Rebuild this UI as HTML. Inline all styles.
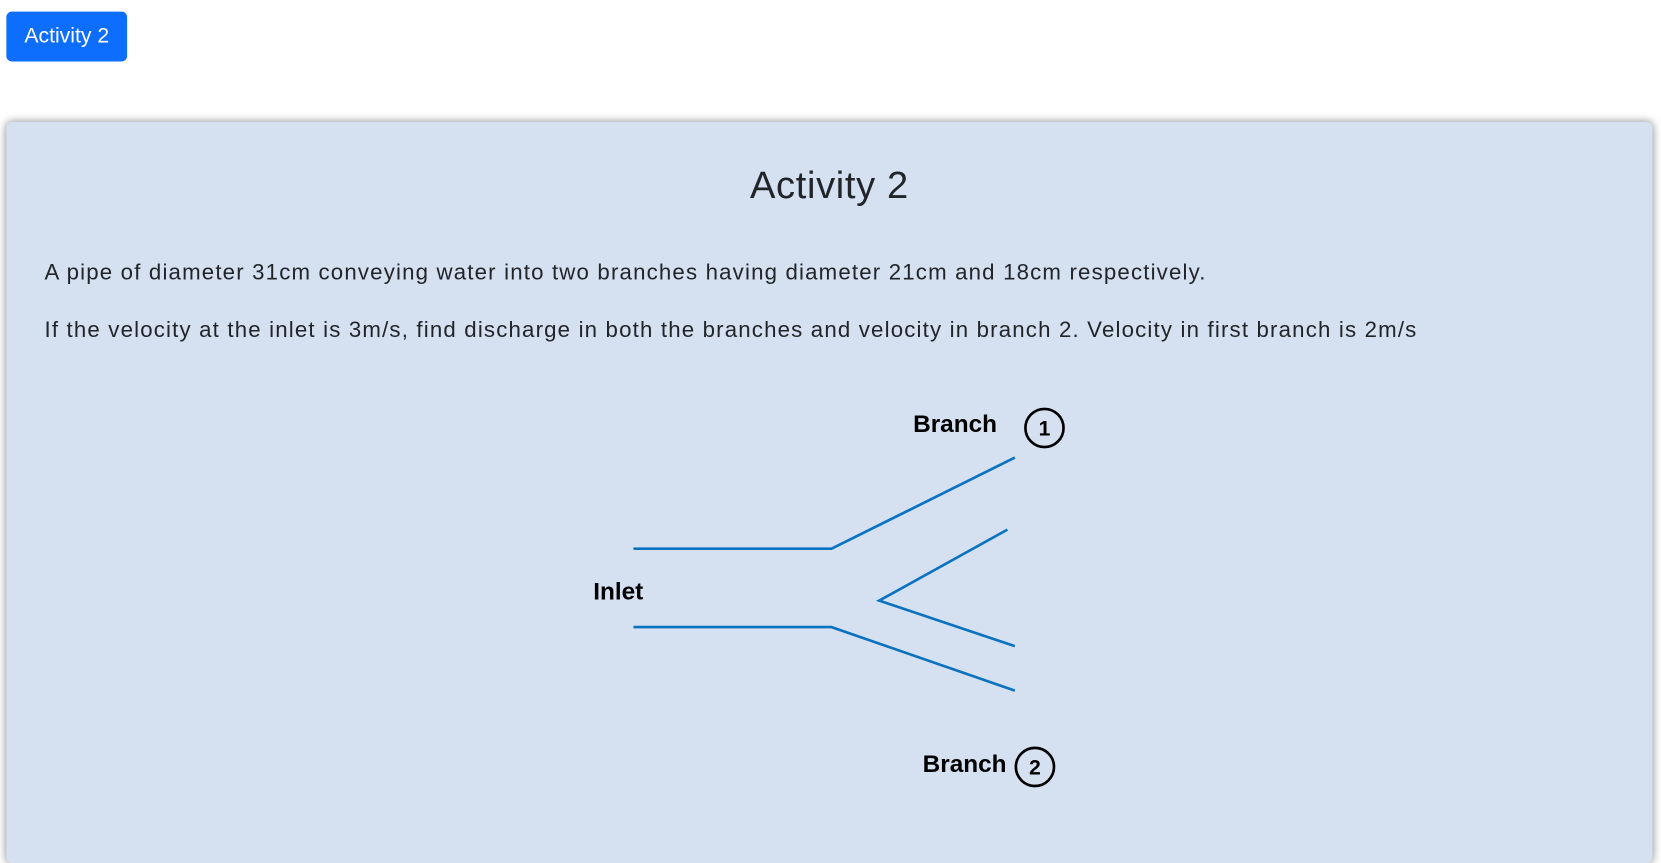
<!DOCTYPE html>
<html><head><style>
body{margin:0;width:1661px;height:792px;overflow:hidden;background:#fff;font-family:"Liberation Sans",sans-serif;}
#w{position:absolute;left:0;top:0;width:1568px;height:748px;transform:scale(1.0593);transform-origin:0 0;}
.btn{position:absolute;left:6px;top:11px;width:114px;height:47px;background:#0d6efd;color:#fff;border-radius:5px;font-size:20px;line-height:47px;text-align:center;}
.card{position:absolute;left:6px;top:115px;width:1554px;height:700px;background:#d5e0f1;border-radius:6px;box-shadow:0 0 8px rgba(0,0,0,.45);}
h2{position:absolute;left:0;right:0;margin:0;text-align:center;font-size:36px;letter-spacing:0.6px;font-weight:normal;color:#212529;top:39px;}
p{position:absolute;left:36px;margin:0;font-size:21px;letter-spacing:1.1px;color:#212529;white-space:nowrap;}
</style></head><body>
<div id="w">
<div class="btn">Activity 2</div>
<div class="card">
<h2>Activity 2</h2>
<p style="top:131px">A pipe of diameter 31cm conveying water into two branches having diameter 21cm and 18cm respectively.</p>
<p style="top:185px">If the velocity at the inlet is 3m/s, find discharge in both the branches and velocity in branch 2. Velocity in first branch is 2m/s</p>
</div>
<svg style="position:absolute;left:0;top:0" width="1568" height="748">
<g stroke="#0a72be" stroke-width="2.5" fill="none">
<polyline points="598,518 785,518 958,432"/>
<polyline points="951,500 830,567 958,610"/>
<polyline points="598,592 785,592 958,652"/>
</g>
<g font-family="Liberation Sans,sans-serif" font-weight="bold" font-size="23" fill="#000">
<text x="862" y="408">Branch</text>
<text x="560" y="566">Inlet</text>
<text x="871" y="729">Branch</text>
<text x="986" y="411" text-anchor="middle" font-size="20">1</text>
<text x="977" y="731" text-anchor="middle" font-size="20">2</text>
</g>
<circle cx="986" cy="404" r="18" stroke="#000" stroke-width="2.5" fill="none"/>
<circle cx="977" cy="724" r="18" stroke="#000" stroke-width="2.5" fill="none"/>
</svg>
</div>
</body></html>
